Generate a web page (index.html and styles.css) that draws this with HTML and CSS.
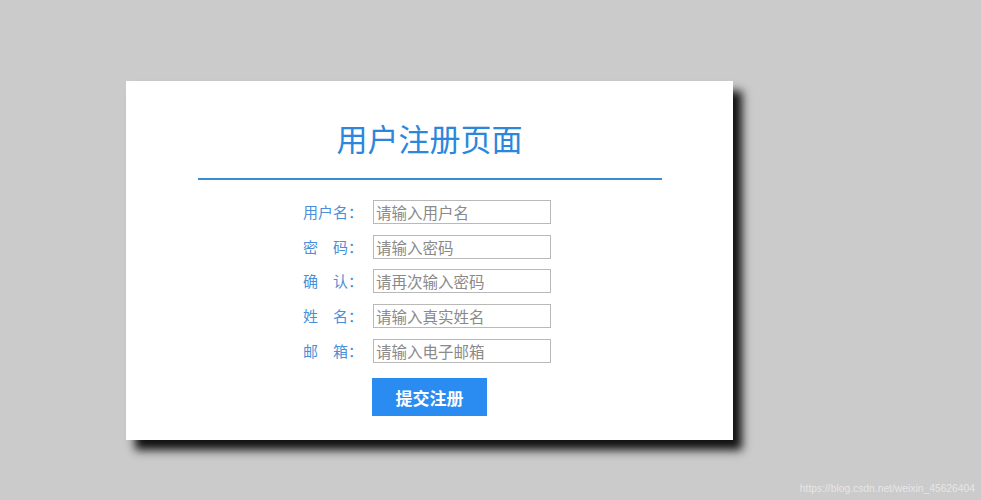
FILE: index.html
```html
<!DOCTYPE html>
<html lang="zh-CN">
  <head>
    <meta charset="UTF-8" />
    <meta name="viewport" content="width=device-width, initial-scale=1.0" />
    <title>用户注册页面</title>
    <link rel="stylesheet" href="styles.css">
  </head>
  <body>
    <div class="register">
      <h1 class="register__title">用户注册页面</h1>
      <hr class="register__line" />
      <form class="register__form">
        <div class="register__row">
          <label for="username">用户名：</label>
          <input type="text" id="username" placeholder="请输入用户名" />
        </div>
        <div class="register__row">
          <label for="password">密　码：</label>
          <input type="password" id="password" placeholder="请输入密码" />
        </div>
        <div class="register__row">
          <label for="confirm">确　认：</label>
          <input type="password" id="confirm" placeholder="请再次输入密码" />
        </div>
        <div class="register__row">
          <label for="realname">姓　名：</label>
          <input type="text" id="realname" placeholder="请输入真实姓名" />
        </div>
        <div class="register__row">
          <label for="email">邮　箱：</label>
          <input type="text" id="email" placeholder="请输入电子邮箱" />
        </div>
        <div class="register__row">
          <span class="register__spacer"></span>
          <button type="button" class="register__submit">提交注册</button>
        </div>
      </form>
    </div>
    <p class="watermark">https://blog.csdn.net/weixin_45626404</p>
  </body>
</html>
```

FILE: styles.css
```css
body {
  margin: 0;
  background: #cbcbcb;
  height: 500px;
  padding: 81px 0 0 126px;
  box-sizing: border-box;
  font-family: "Noto Sans CJK SC", "Noto Sans", sans-serif;
  overflow: hidden;
}
.register {
  width: 607px;
  height: 359px;
  background: #fff;
  box-shadow: 9px 10px 9px rgba(0, 0, 0, 0.92);
  display: flex;
  flex-direction: column;
  align-items: center;
}
.register__title {
  margin: 0;
  padding-top: 36px;
  height: 42px;
  line-height: 42px;
  font-size: 31px;
  font-weight: normal;
  color: #2b87dc;
}
.register__line {
  width: 464px;
  height: 2px;
  margin: 19px 0 0 0;
  border: none;
  background: #3a8bd0;
}
.register__form {
  margin-top: 20px;
  display: flex;
  flex-direction: column;
  gap: 10.7px;
  padding-right: 5px;
}
.register__row {
  display: flex;
  align-items: center;
}
.register__row label,
.register__spacer {
  width: 70px;
  flex: none;
  font-size: 15px;
  color: #4a8fd8;
  line-height: 24px;
}
.register__row input {
  width: 178px;
  height: 24px;
  box-sizing: border-box;
  border: 1px solid #b9b9b9;
  padding: 0 2px;
  font-family: inherit;
  font-size: 15.5px;
  color: #333;
}
.register__row input::placeholder {
  color: #8a8a8a;
}
.register__submit {
  margin-top: 5px;
  margin-left: -1px;
  width: 115px;
  height: 38px;
  border: none;
  background: #2a8cf0;
  color: #fff;
  font-family: inherit;
  font-size: 17px;
  font-weight: bold;
  cursor: pointer;
}
.watermark {
  position: absolute;
  right: 6px;
  bottom: 6px;
  margin: 0;
  font-family: "Liberation Sans", Arial, sans-serif;
  font-size: 10.3px;
  color: #e6e6e6;
}
```
